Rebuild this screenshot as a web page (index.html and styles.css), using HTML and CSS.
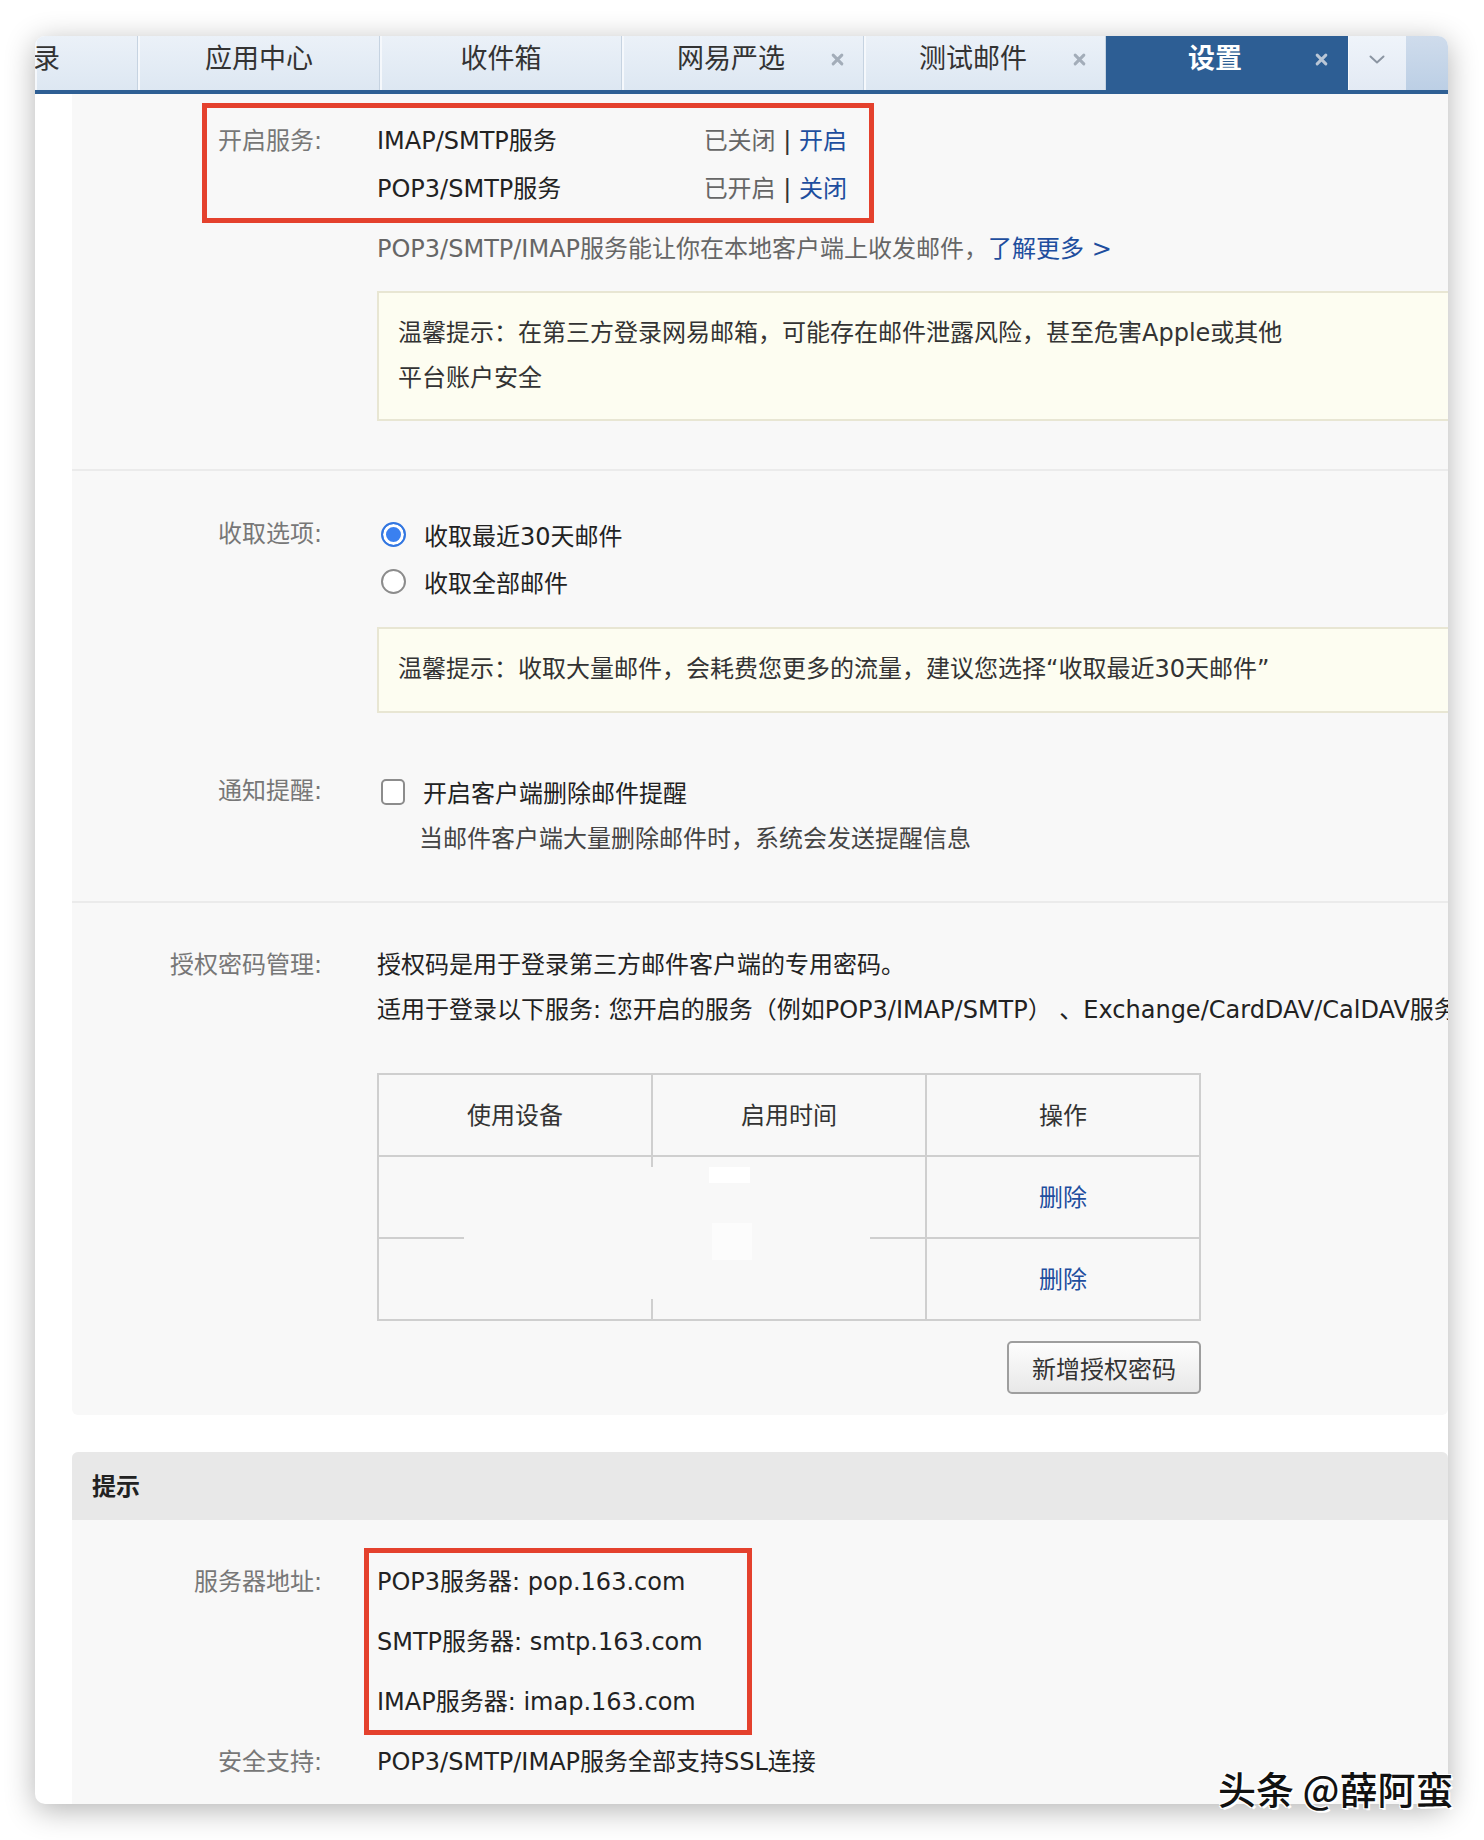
FILE: index.html
```html
<!DOCTYPE html>
<html lang="zh-CN">
<head>
<meta charset="utf-8">
<title>设置 - POP3/SMTP/IMAP</title>
<link rel="stylesheet" href="styles.css">
</head>
<body>
<div class="stage">
  <div class="window">
    <div class="tabbar">
      <div class="tab tab-partial"><span class="tab-label">录</span></div>
      <div class="tab"><span class="tab-label">应用中心</span></div>
      <div class="tab"><span class="tab-label">收件箱</span></div>
      <div class="tab tab-closable"><span class="tab-label">网易严选</span><svg class="tab-close" viewBox="0 0 12 12"><path d="M2 2L10 10M10 2L2 10"/></svg></div>
      <div class="tab tab-closable"><span class="tab-label">测试邮件</span><svg class="tab-close" viewBox="0 0 12 12"><path d="M2 2L10 10M10 2L2 10"/></svg></div>
      <div class="tab tab-closable tab-active"><span class="tab-label">设置</span><svg class="tab-close" viewBox="0 0 12 12"><path d="M2 2L10 10M10 2L2 10"/></svg></div>
      <div class="tab-more"><svg class="chevron" viewBox="0 0 16 9"><polyline points="1.5,1.5 8,7.5 14.5,1.5"/></svg></div>
      <div class="tab-fill"></div>
    </div>

    <div class="body">
      <div class="content">
        <div class="card settings">
          <section class="block block-service">
            <div class="field">
              <div class="label label-48">开启服务:</div>
              <div class="value">
                <div class="svc-row"><span class="svc-name">IMAP/SMTP服务</span><span class="svc-state">已关闭 <span class="sep">|</span> <a class="link" href="#">开启</a></span></div>
                <div class="svc-row"><span class="svc-name">POP3/SMTP服务</span><span class="svc-state">已开启 <span class="sep">|</span> <a class="link" href="#">关闭</a></span></div>
                <p class="info">POP3/SMTP/IMAP服务能让你在本地客户端上收发邮件，<a class="link" href="#">了解更多 &gt;</a></p>
                <div class="note note-2l">温馨提示：在第三方登录网易邮箱，可能存在邮件泄露风险，甚至危害Apple或其他<br>平台账户安全</div>
              </div>
            </div>
            <div class="annot annot-service"></div>
          </section>

          <section class="block block-fetch">
            <div class="field">
              <div class="label">收取选项:</div>
              <div class="value">
                <div class="opt"><span class="radio checked"></span><span>收取最近30天邮件</span></div>
                <div class="opt"><span class="radio"></span><span>收取全部邮件</span></div>
                <div class="note note-1l">温馨提示：收取大量邮件，会耗费您更多的流量，建议您选择“收取最近30天邮件”</div>
              </div>
            </div>
            <div class="field field-notify">
              <div class="label">通知提醒:</div>
              <div class="value">
                <div class="opt"><span class="check"></span><span>开启客户端删除邮件提醒</span></div>
                <div class="desc">当邮件客户端大量删除邮件时，系统会发送提醒信息</div>
              </div>
            </div>
          </section>

          <section class="block block-auth">
            <div class="field">
              <div class="label label-45">授权密码管理:</div>
              <div class="value">
                <div class="line">授权码是用于登录第三方邮件客户端的专用密码。</div>
                <div class="line">适用于登录以下服务: 您开启的服务（例如POP3/IMAP/SMTP） 、Exchange/CardDAV/CalDAV服务</div>
                <div class="grant-wrap">
                  <div class="grant" role="table">
                    <div class="cell head" role="columnheader">使用设备</div>
                    <div class="cell head" role="columnheader">启用时间</div>
                    <div class="cell head" role="columnheader">操作</div>
                    <div class="cell" role="cell"></div>
                    <div class="cell" role="cell"></div>
                    <div class="cell" role="cell"><a class="link" href="#">删除</a></div>
                    <div class="cell" role="cell"></div>
                    <div class="cell" role="cell"></div>
                    <div class="cell" role="cell"><a class="link" href="#">删除</a></div>
                  </div>
                  <div class="redact"></div>
                  <div class="redact-spot spot-a"></div>
                  <div class="redact-spot spot-b"></div>
                </div>
                <div class="btn-row"><button class="btn" type="button">新增授权密码</button></div>
              </div>
            </div>
          </section>
        </div>

        <div class="card tips">
          <div class="tips-head">提示</div>
          <div class="tips-body">
            <div class="field">
              <div class="label label-60">服务器地址:</div>
              <div class="value">
                <div class="addr">POP3服务器: pop.163.com</div>
                <div class="addr">SMTP服务器: smtp.163.com</div>
                <div class="addr">IMAP服务器: imap.163.com</div>
              </div>
            </div>
            <div class="field">
              <div class="label label-60">安全支持:</div>
              <div class="value">
                <div class="addr">POP3/SMTP/IMAP服务全部支持SSL连接</div>
              </div>
            </div>
            <div class="annot annot-addr"></div>
          </div>
        </div>
      </div>
    </div>
  </div>
  <div class="watermark">头条 @薛阿蛮</div>
</div>
</body>
</html>
```

FILE: styles.css
```css
* { box-sizing: border-box; }
html, body { margin: 0; padding: 0; }
body {
  background: #ffffff;
  font-family: "DejaVu Sans", "Noto Sans CJK SC", sans-serif;
  font-size: 24px;
  color: #222;
  text-spacing-trim: space-all;
}
.stage {
  position: relative;
  width: 1484px;
  height: 1840px;
  padding: 36px 36px 36px 35px;
}
.window {
  width: 1413px;
  height: 1768px;
  background: #fff;
  border-radius: 10px;
  box-shadow: 0 6px 30px rgba(0, 0, 0, 0.30);
  overflow: hidden;
  display: flex;
  flex-direction: column;
}

/* tabs */
.tabbar {
  flex: none;
  display: flex;
  height: 58px;
  border-bottom: 4px solid #2e5f94;
}
.tab {
  position: relative;
  width: 242px;
  flex: none;
  display: flex;
  align-items: center;
  justify-content: center;
  padding-bottom: 14px;
  background: linear-gradient(#ebf1f8, #dde7f2);
  box-shadow: inset 2px 0 0 #f5f8fc, inset -1px 0 0 #c6d3e1;
  font-family: "Noto Sans CJK SC", sans-serif;
  font-size: 27px;
  color: #333;
  white-space: nowrap;
  overflow: hidden;
}
.tab-partial {
  width: 103px;
  justify-content: flex-start;
  padding-left: 0;
}
.tab-partial .tab-label { margin-left: -2px; }
.tab-closable { padding-right: 24px; }
.tab-close {
  position: absolute;
  right: 20px;
  top: 17px;
  width: 13px;
  height: 13px;
  fill: none;
  stroke: #a3adb9;
  stroke-width: 2.8;
  stroke-linecap: round;
}
.tab-active {
  background: #2d5e94;
  box-shadow: none;
  color: #fff;
  font-weight: bold;
}
.tab-active .tab-close { stroke: #b9c6d6; }
.tab-more {
  width: 58px;
  flex: none;
  display: flex;
  align-items: center;
  justify-content: center;
  padding-bottom: 8px;
  background: linear-gradient(#eff4fa, #e3eaf4);
  box-shadow: inset 1px 0 0 #f7f9fc;
}
.chevron {
  width: 16px;
  height: 9px;
  fill: none;
  stroke: #8b95a2;
  stroke-width: 2;
  stroke-linecap: round;
  stroke-linejoin: round;
}
.tab-fill {
  flex: 1;
  background: linear-gradient(#cfdcec, #bccfe5);
}

/* body */
.body {
  flex: 1;
  min-height: 0;
  display: flex;
  padding-left: 37px;
}
.content {
  flex: 1;
  min-width: 0;
  display: flex;
  flex-direction: column;
}
.card {
  position: relative;
  background: #f8f8f8;
}
.settings { flex: none; border-radius: 0 0 6px 6px; }
.tips { margin-top: 37px; flex: 1; border-radius: 6px 6px 0 0; }

.block {
  position: relative;
  border-bottom: 2px solid #ebebeb;
}
.block-service { padding: 23px 0 48px; }
.block-fetch { padding: 40px 0 38px; }
.block-auth { padding: 40px 0 21px; border-bottom: none; }

.field {
  display: grid;
  grid-template-columns: 250px 1fr;
  column-gap: 55px;
}
.label {
  text-align: right;
  color: #777;
  line-height: 47px;
  white-space: nowrap;
}
.label-48 { line-height: 48px; }
.label-45 { line-height: 45px; }
.label-60 { line-height: 60px; }
.value { min-width: 0; }

.link { color: #1e4e9e; text-decoration: none; }

.svc-row {
  display: flex;
  justify-content: space-between;
  width: 470px;
  line-height: 48px;
  white-space: nowrap;
}
.svc-name { color: #222; }
.svc-state { color: #666; }
.sep { color: #333; }

.info {
  margin: 16px 0 0;
  line-height: 40px;
  color: #666;
  white-space: nowrap;
}
.note {
  width: 1120px;
  border: 2px solid #e8e6d3;
  background: #fdfdf1;
  color: #333;
  line-height: 45px;
  white-space: nowrap;
}
.note-2l { margin-top: 22px; padding: 18px 19px; }
.note-1l { margin-top: 22px; padding: 18px 19px 19px; }

.opt {
  display: flex;
  align-items: center;
  height: 47px;
  white-space: nowrap;
}
.radio {
  flex: none;
  width: 25px;
  height: 25px;
  margin: 0 18px 0 4px;
  border-radius: 50%;
  border: 2px solid #8c8c8c;
  background: #fff;
}
.radio.checked {
  border-color: #3276e0;
  background: #3a80f0;
  box-shadow: inset 0 0 0 3px #fff;
}
.check {
  flex: none;
  width: 24px;
  height: 26px;
  margin: 0 18px 0 4px;
  border-radius: 5px;
  border: 2px solid #8c8c8c;
  background: #fff;
}
.field-notify { margin-top: 55px; }
.desc {
  margin-left: 42px;
  line-height: 48px;
  color: #444;
  white-space: nowrap;
}

.line {
  line-height: 45px;
  white-space: nowrap;
}
.grant-wrap {
  position: relative;
  width: 824px;
  margin-top: 40px;
}
.grant {
  display: grid;
  grid-template-columns: repeat(3, 1fr);
  border-top: 2px solid #cfcfcf;
  border-left: 2px solid #cfcfcf;
}
.cell {
  height: 82px;
  padding-bottom: 4px;
  border-right: 2px solid #cfcfcf;
  border-bottom: 2px solid #cfcfcf;
  display: flex;
  align-items: center;
  justify-content: center;
  color: #333;
}
.redact {
  position: absolute;
  left: 87px;
  top: 94px;
  width: 406px;
  height: 132px;
  background: #f8f8f8;
}
.redact-spot {
  position: absolute;
  background: #ffffff;
}
.spot-a { left: 332px; top: 94px; width: 41px; height: 16px; }
.spot-b { left: 335px; top: 150px; width: 40px; height: 37px; background: #fcfcfc; }

.btn-row {
  width: 824px;
  display: flex;
  justify-content: flex-end;
  margin-top: 20px;
}
.btn {
  width: 194px;
  height: 53px;
  border: 2px solid #9e9e9e;
  border-radius: 5px;
  background: linear-gradient(#fdfdfd, #e8e8e8);
  font-family: "DejaVu Sans", "Noto Sans CJK SC", sans-serif;
  font-size: 24px;
  color: #333;
  padding: 0;
}

.tips-head {
  height: 68px;
  display: flex;
  align-items: center;
  padding-left: 20px;
  padding-bottom: 3px;
  background: #e8e8e8;
  border-radius: 6px 6px 0 0;
  font-weight: bold;
  color: #222;
}
.tips-body {
  position: relative;
  padding-top: 32px;
}
.addr {
  line-height: 60px;
  white-space: nowrap;
}

.annot {
  position: absolute;
  border: 5px solid #e4412d;
  pointer-events: none;
}
.annot-service { left: 130px; top: 9px; width: 672px; height: 120px; }
.annot-addr { left: 292px; top: 28px; width: 388px; height: 187px; }

.watermark {
  position: absolute;
  left: 1218px;
  top: 1760px;
  font-family: "Noto Sans CJK SC", sans-serif;
  font-size: 38px;
  font-weight: 500;
  color: #111;
  white-space: nowrap;
  text-shadow: 2px 2px 0 #fff, -1px -1px 0 #fff, 1px -1px 0 #fff, -1px 1px 0 #fff;
}
```
